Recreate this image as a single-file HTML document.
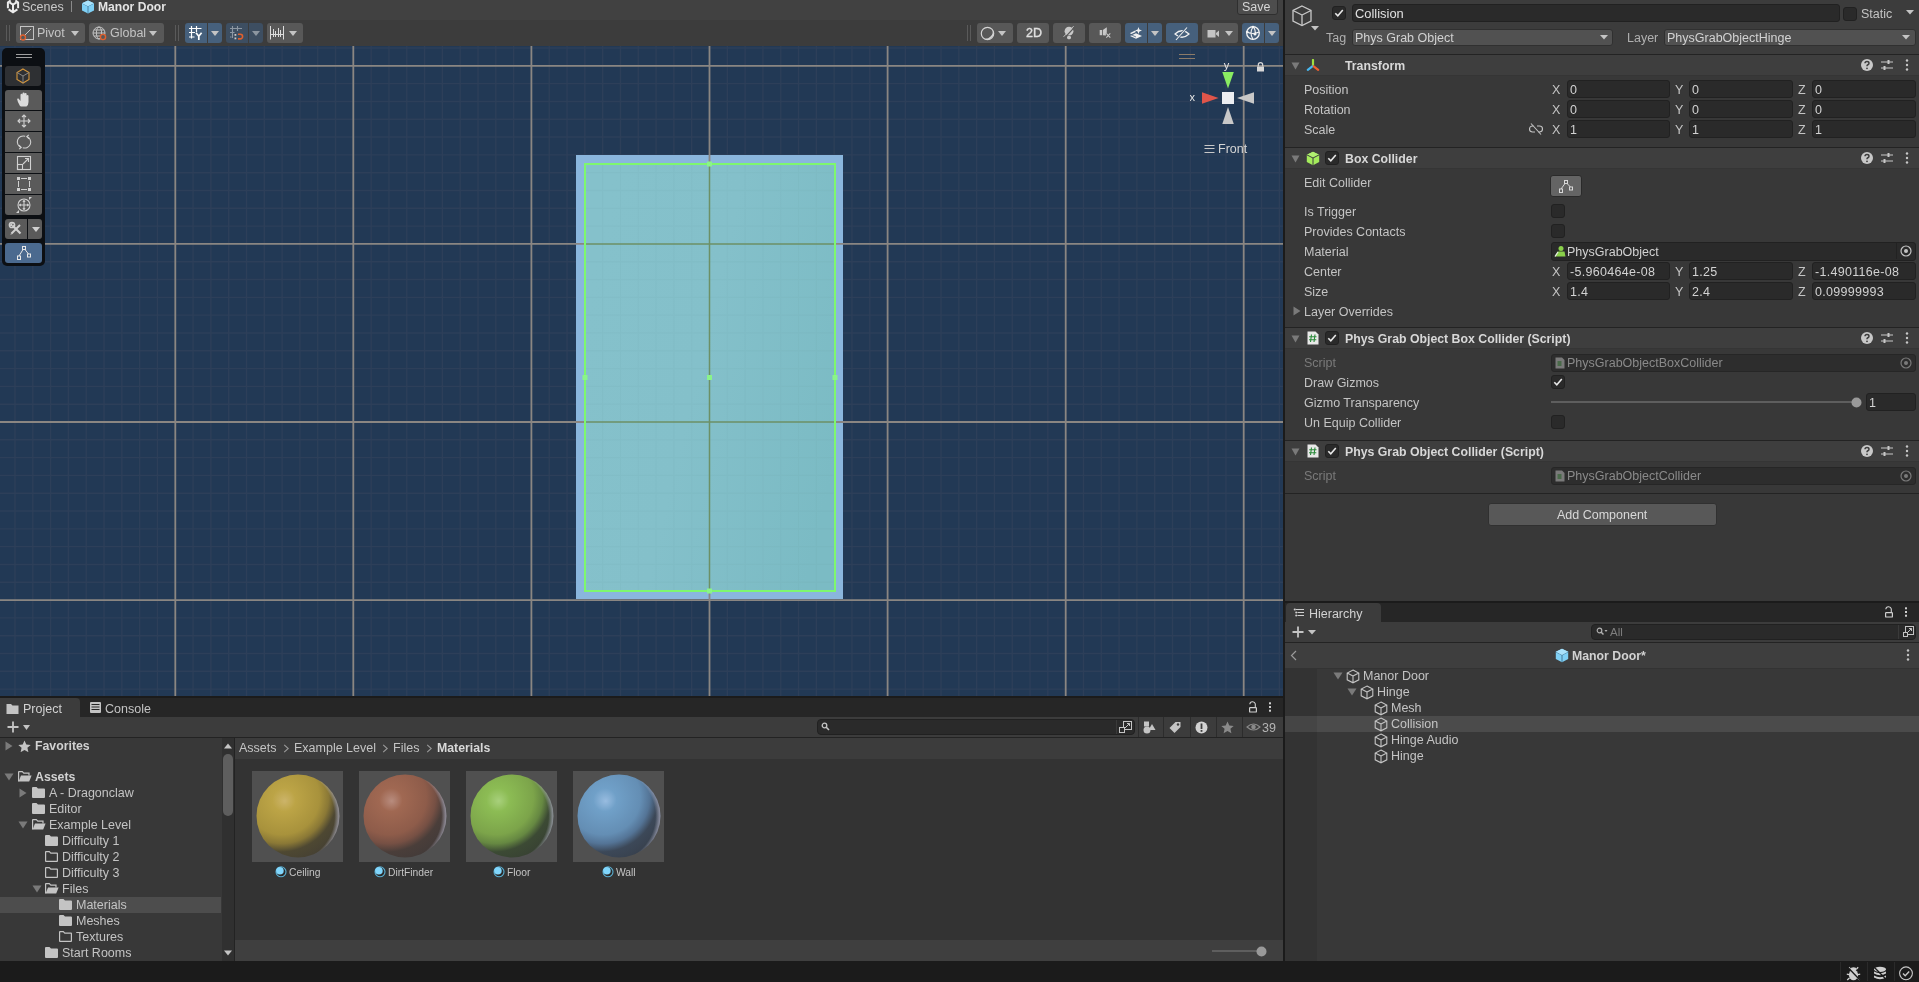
<!DOCTYPE html><html><head><meta charset="utf-8"><style>
html,body{margin:0;padding:0;}
body{width:1919px;height:982px;overflow:hidden;position:relative;background:#383838;font-family:"Liberation Sans",sans-serif;}
.t{position:absolute;white-space:nowrap;line-height:14px;-webkit-font-smoothing:antialiased;will-change:transform;font-family:"Liberation Sans",sans-serif;}
.r{position:absolute;}
</style></head><body>
<div class="r" style="left:0px;top:0px;width:1283px;height:20px;background:#414141;"></div>
<div class="r" style="left:0px;top:20px;width:1283px;height:26px;background:#3c3c3c;"></div>
<div class="r" style="left:1283px;top:0px;width:2px;height:961px;background:#1b1b1b;"></div>
<div class="r" style="left:0px;top:696px;width:1283px;height:2px;background:#1b1b1b;"></div>
<div class="r" style="left:0px;top:961px;width:1919px;height:21px;background:#1b1b1b;"></div>
<svg width="1283" height="650" style="position:absolute;left:0;top:46px"><rect width="1283" height="650" fill="#223955"/><path d="M14.99 0V650 M32.80 0V650 M50.60 0V650 M68.41 0V650 M86.22 0V650 M104.03 0V650 M121.84 0V650 M139.64 0V650 M157.45 0V650 M193.07 0V650 M210.88 0V650 M228.68 0V650 M246.49 0V650 M264.30 0V650 M282.11 0V650 M299.92 0V650 M317.72 0V650 M335.53 0V650 M371.15 0V650 M388.96 0V650 M406.76 0V650 M424.57 0V650 M442.38 0V650 M460.19 0V650 M478.00 0V650 M495.80 0V650 M513.61 0V650 M549.23 0V650 M567.04 0V650 M584.84 0V650 M602.65 0V650 M620.46 0V650 M638.27 0V650 M656.08 0V650 M673.88 0V650 M691.69 0V650 M727.31 0V650 M745.12 0V650 M762.92 0V650 M780.73 0V650 M798.54 0V650 M816.35 0V650 M834.16 0V650 M851.96 0V650 M869.77 0V650 M905.39 0V650 M923.20 0V650 M941.00 0V650 M958.81 0V650 M976.62 0V650 M994.43 0V650 M1012.24 0V650 M1030.04 0V650 M1047.85 0V650 M1083.47 0V650 M1101.28 0V650 M1119.08 0V650 M1136.89 0V650 M1154.70 0V650 M1172.51 0V650 M1190.32 0V650 M1208.12 0V650 M1225.93 0V650 M1261.55 0V650 M1279.36 0V650 M0 2.03H1283 M0 37.65H1283 M0 55.46H1283 M0 73.26H1283 M0 91.07H1283 M0 108.88H1283 M0 126.69H1283 M0 144.50H1283 M0 162.30H1283 M0 180.11H1283 M0 215.73H1283 M0 233.54H1283 M0 251.34H1283 M0 269.15H1283 M0 286.96H1283 M0 304.77H1283 M0 322.58H1283 M0 340.38H1283 M0 358.19H1283 M0 393.81H1283 M0 411.62H1283 M0 429.42H1283 M0 447.23H1283 M0 465.04H1283 M0 482.85H1283 M0 500.66H1283 M0 518.46H1283 M0 536.27H1283 M0 571.89H1283 M0 589.70H1283 M0 607.50H1283 M0 625.31H1283 M0 643.12H1283" stroke="#2d3f59" stroke-width="1.4" fill="none"/><rect x="576" y="109" width="267" height="444" fill="#8ab6dd"/><path d="M175.3 0V650 M353.3 0V650 M531.4 0V650 M709.5 0V650 M887.6 0V650 M1065.7 0V650 M1243.7 0V650 M0 19.8H1283 M0 197.9H1283 M0 376.0H1283 M0 554.1H1283" stroke="#8a8682" stroke-width="1.8" fill="none"/><defs><linearGradient id="tealg" x1="0" y1="0.3" x2="1" y2="0.7"><stop offset="0" stop-color="#85c1cb"/><stop offset="0.45" stop-color="#84c0ca"/><stop offset="1" stop-color="#7bbbc4"/></linearGradient></defs><rect x="585" y="118" width="250" height="427" fill="url(#tealg)"/><clipPath id="tealclip"><rect x="585" y="118" width="250" height="427"/></clipPath><path clip-path="url(#tealclip)" d="M14.99 0V650 M32.80 0V650 M50.60 0V650 M68.41 0V650 M86.22 0V650 M104.03 0V650 M121.84 0V650 M139.64 0V650 M157.45 0V650 M193.07 0V650 M210.88 0V650 M228.68 0V650 M246.49 0V650 M264.30 0V650 M282.11 0V650 M299.92 0V650 M317.72 0V650 M335.53 0V650 M371.15 0V650 M388.96 0V650 M406.76 0V650 M424.57 0V650 M442.38 0V650 M460.19 0V650 M478.00 0V650 M495.80 0V650 M513.61 0V650 M549.23 0V650 M567.04 0V650 M584.84 0V650 M602.65 0V650 M620.46 0V650 M638.27 0V650 M656.08 0V650 M673.88 0V650 M691.69 0V650 M727.31 0V650 M745.12 0V650 M762.92 0V650 M780.73 0V650 M798.54 0V650 M816.35 0V650 M834.16 0V650 M851.96 0V650 M869.77 0V650 M905.39 0V650 M923.20 0V650 M941.00 0V650 M958.81 0V650 M976.62 0V650 M994.43 0V650 M1012.24 0V650 M1030.04 0V650 M1047.85 0V650 M1083.47 0V650 M1101.28 0V650 M1119.08 0V650 M1136.89 0V650 M1154.70 0V650 M1172.51 0V650 M1190.32 0V650 M1208.12 0V650 M1225.93 0V650 M1261.55 0V650 M1279.36 0V650 M0 2.03H1283 M0 37.65H1283 M0 55.46H1283 M0 73.26H1283 M0 91.07H1283 M0 108.88H1283 M0 126.69H1283 M0 144.50H1283 M0 162.30H1283 M0 180.11H1283 M0 215.73H1283 M0 233.54H1283 M0 251.34H1283 M0 269.15H1283 M0 286.96H1283 M0 304.77H1283 M0 322.58H1283 M0 340.38H1283 M0 358.19H1283 M0 393.81H1283 M0 411.62H1283 M0 429.42H1283 M0 447.23H1283 M0 465.04H1283 M0 482.85H1283 M0 500.66H1283 M0 518.46H1283 M0 536.27H1283 M0 571.89H1283 M0 589.70H1283 M0 607.50H1283 M0 625.31H1283 M0 643.12H1283" stroke="#000000" stroke-opacity="0.016" stroke-width="1.3" fill="none"/><path clip-path="url(#tealclip)" d="M175.3 0V650 M353.3 0V650 M531.4 0V650 M709.5 0V650 M887.6 0V650 M1065.7 0V650 M1243.7 0V650 M0 19.8H1283 M0 197.9H1283 M0 376.0H1283 M0 554.1H1283" stroke="#6c9066" stroke-width="1.5" fill="none"/><rect x="585" y="118" width="250" height="427" fill="none" stroke="#7ef76e" stroke-width="2"/><rect x="707.0" y="115.5" width="5" height="5" fill="#8af48a"/><rect x="707.0" y="542.5" width="5" height="5" fill="#8af48a"/><rect x="582.5" y="329.0" width="5" height="5" fill="#8af48a"/><rect x="832.5" y="329.0" width="5" height="5" fill="#8af48a"/><rect x="707.0" y="329.0" width="5" height="5" fill="#8af48a"/></svg>
<svg class="r" style="left:5px;top:0px;" width="16" height="14" viewBox="0 0 16 14"><g fill="none" stroke="#ececec" stroke-width="2" stroke-linejoin="miter"><path d="M2.9 8.2V2.6L5.6 0.4"/><path d="M13.1 8.2V2.6L10.4 0.4"/><path d="M4.4 2.4L8 4.6L11.6 2.4"/><path d="M8 4.6V11"/><path d="M3.6 9.4L8 12.2L12.4 9.4"/></g></svg>
<div class="t" style="left:22.40px;top:0.30px;font-size:12.5px;color:#c8c8c8;">Scenes</div>
<div class="r" style="left:71px;top:1px;width:1px;height:11px;background:#8a8a8a;"></div>
<svg class="r" style="left:81px;top:0px;" width="14" height="14" viewBox="0 0 14 14"><path d="M7 0.5 L13 3.2 L13 10.5 L7 13.5 L1 10.5 L1 3.2Z" fill="#7fd0f5"/><path d="M7 6.2 L13 3.2 M7 6.2 L1 3.2 M7 6.2 V13.5" stroke="#3f6f8f" stroke-width="0.8" fill="none"/><path d="M7 0.5 L13 3.2 L7 6.2 L1 3.2Z" fill="#a9e2fb"/></svg>
<div class="t" style="left:97.60px;top:0.48px;font-size:12.1px;color:#e4e4e4;font-weight:bold;">Manor Door</div>
<div class="r" style="left:1237px;top:-3px;width:41px;height:18px;background:#4d4d4d;border:1px solid #2f2f2f;border-radius:3px;box-sizing:border-box;"></div>
<div class="t" style="left:1242.00px;top:-0.20px;font-size:12.5px;color:#d6d6d6;">Save</div>
<div class="r" style="left:6px;top:25px;width:1px;height:16px;background:#5a5a5a;"></div>
<div class="r" style="left:9px;top:25px;width:1px;height:16px;background:#5a5a5a;"></div>
<div class="r" style="left:16px;top:23px;width:69px;height:20px;background:#585858;border-radius:3px;"></div>
<svg class="r" style="left:19px;top:25px;" width="16" height="16" viewBox="0 0 16 16"><rect x="1.5" y="1.5" width="13" height="13" fill="none" stroke="#c4c4c4" stroke-width="1"/><path d="M5.5 10.5 L12 4" stroke="#c4c4c4" stroke-width="1"/><circle cx="4" cy="12.5" r="2.5" fill="#585858" stroke="#e0602e" stroke-width="1.3"/></svg>
<div class="t" style="left:37.10px;top:26.20px;font-size:12.5px;color:#c4c4c4;">Pivot</div>
<svg class="r" style="left:71px;top:31px;" width="8" height="5" viewBox="0 0 8 5"><path d="M0 0H8L4.0 5Z" fill="#c4c4c4"/></svg>
<div class="r" style="left:89px;top:23px;width:75px;height:20px;background:#585858;border-radius:3px;"></div>
<svg class="r" style="left:92px;top:26px;" width="15" height="15" viewBox="0 0 15 15"><g fill="none" stroke="#c4c4c4" stroke-width="1"><circle cx="7" cy="7" r="6"/><ellipse cx="7" cy="7" rx="2.6" ry="6"/><path d="M1 7H13M2 4H12M2 10H12"/></g><circle cx="11" cy="11" r="2.6" fill="#585858" stroke="#e0602e" stroke-width="1.4"/></svg>
<div class="t" style="left:110.00px;top:26.20px;font-size:12.5px;color:#c4c4c4;">Global</div>
<svg class="r" style="left:149px;top:31px;" width="8" height="5" viewBox="0 0 8 5"><path d="M0 0H8L4.0 5Z" fill="#c4c4c4"/></svg>
<div class="r" style="left:175px;top:25px;width:1px;height:16px;background:#5a5a5a;"></div>
<div class="r" style="left:178px;top:25px;width:1px;height:16px;background:#5a5a5a;"></div>
<div class="r" style="left:185px;top:23px;width:22px;height:20px;background:#46607c;border-radius:3px 0 0 3px;"></div>
<div class="r" style="left:208px;top:23px;width:14px;height:20px;background:#46607c;border-radius:0 3px 3px 0;"></div>
<svg class="r" style="left:188px;top:25px;" width="16" height="16" viewBox="0 0 16 16"><g stroke="#ffffff" stroke-width="1.2" fill="none"><path d="M3.5 1V13.5M8.5 1V7M1 3.5H13.5M1 7.5H7M1 12H6.5"/></g><path d="M8 7.8 L10.8 11.2 L13.6 7.8 M10.8 11.2V15" stroke="#ffffff" stroke-width="1.7" fill="none"/></svg>
<svg class="r" style="left:211px;top:31px;" width="8" height="5" viewBox="0 0 8 5"><path d="M0 0H8L4.0 5Z" fill="#c4c4c4"/></svg>
<div class="r" style="left:226px;top:23px;width:22px;height:20px;background:#3d4e61;border-radius:3px 0 0 3px;"></div>
<div class="r" style="left:249px;top:23px;width:14px;height:20px;background:#3d4e61;border-radius:0 3px 3px 0;"></div>
<svg class="r" style="left:229px;top:25px;" width="16" height="16" viewBox="0 0 16 16"><g stroke="#8c97a3" stroke-width="1.1" fill="none"><path d="M3.5 1V13M8.5 1V6M1 3.5H13M1 7.5H5.5M1 12H2.5"/></g><rect x="5.5" y="9" width="1.8" height="1.8" fill="#c8c8c8"/><rect x="5.5" y="12.5" width="1.8" height="1.8" fill="#c8c8c8"/><path d="M9 9.3 H11.3 A2.3 2.3 0 0 1 11.3 13.9 H9" stroke="#e0602e" stroke-width="1.6" fill="none"/></svg>
<svg class="r" style="left:252px;top:31px;" width="8" height="5" viewBox="0 0 8 5"><path d="M0 0H8L4.0 5Z" fill="#8c96a0"/></svg>
<div class="r" style="left:267px;top:23px;width:36px;height:20px;background:#585858;border-radius:3px;"></div>
<svg class="r" style="left:269px;top:25px;" width="16" height="16" viewBox="0 0 16 16"><g stroke="#dcdcdc" stroke-width="1"><path d="M1.5 1V14.5M14.5 1V14.5M4.5 4V12M6.5 6V12M9.5 3V12M11.5 5V12M1.5 9.5H14.5"/></g></svg>
<svg class="r" style="left:289px;top:31px;" width="8" height="5" viewBox="0 0 8 5"><path d="M0 0H8L4.0 5Z" fill="#c4c4c4"/></svg>
<div class="r" style="left:967px;top:25px;width:1px;height:16px;background:#5a5a5a;"></div>
<div class="r" style="left:970px;top:25px;width:1px;height:16px;background:#5a5a5a;"></div>
<div class="r" style="left:977px;top:23px;width:36px;height:20px;background:#585858;border-radius:3px;"></div>
<svg class="r" style="left:980px;top:26px;" width="16" height="16" viewBox="0 0 16 16"><circle cx="7.5" cy="7.5" r="6.2" fill="none" stroke="#d4d4d4" stroke-width="1.2"/><path d="M12.2 3.4 A6.4 6.4 0 0 1 3.6 12.6 A7 6 -30 0 0 12.2 3.4Z" fill="#d4d4d4"/></svg>
<svg class="r" style="left:998px;top:31px;" width="8" height="5" viewBox="0 0 8 5"><path d="M0 0H8L4.0 5Z" fill="#c4c4c4"/></svg>
<div class="r" style="left:1017px;top:23px;width:32px;height:20px;background:#585858;border-radius:3px;"></div>
<div class="t" style="left:1025.80px;top:25.90px;font-size:12.5px;color:#e0e0e0;-webkit-text-stroke:0.35px #e0e0e0;">2D</div>
<div class="r" style="left:1053px;top:23px;width:32px;height:20px;background:#585858;border-radius:3px;"></div>
<svg class="r" style="left:1061px;top:25px;" width="16" height="17" viewBox="0 0 16 17"><circle cx="8" cy="6.2" r="4.4" fill="#c8c8c8"/><rect x="6" y="11" width="4" height="3.2" rx="1.4" fill="#c8c8c8"/><path d="M3.8 12.6 L13.4 2.4" stroke="#585858" stroke-width="1.3"/><path d="M2.6 11.8 L12.6 1.2" stroke="#c8c8c8" stroke-width="1"/></svg>
<div class="r" style="left:1089px;top:23px;width:32px;height:20px;background:#585858;border-radius:3px;"></div>
<svg class="r" style="left:1098px;top:25px;" width="14" height="15" viewBox="0 0 14 15"><rect x="1.7" y="5" width="2.3" height="5.2" fill="#c8c8c8"/><path d="M4.8 5 L8.8 2.3 V8.4 L7.8 10.5 L4.8 10.2Z" fill="#c8c8c8"/><path d="M8.3 8.3 L12.3 12.6 M12.3 8.3 L8.3 12.6" stroke="#585858" stroke-width="2.2"/><path d="M8.3 8.3 L12.3 12.6 M12.3 8.3 L8.3 12.6" stroke="#c8c8c8" stroke-width="1.1"/></svg>
<div class="r" style="left:1125px;top:23px;width:22px;height:20px;background:#46607c;border-radius:3px 0 0 3px;"></div>
<div class="r" style="left:1148px;top:23px;width:14px;height:20px;background:#46607c;border-radius:0 3px 3px 0;"></div>
<svg class="r" style="left:1129px;top:26px;" width="15" height="15" viewBox="0 0 15 15"><path d="M1 10 L7 7.2 L13 10 L7 12.8Z" fill="#f0f0f0"/><path d="M1.5 7.6 L6.5 5.2" stroke="#f0f0f0" stroke-width="1.5"/><path d="M1 8.2 L7 11" stroke="#46607c" stroke-width="0.8"/><path d="M9.5 1 L10.4 3.6 L13 4.5 L10.4 5.4 L9.5 8 L8.6 5.4 L6 4.5 L8.6 3.6Z" fill="#f0f0f0"/></svg>
<svg class="r" style="left:1151px;top:31px;" width="8" height="5" viewBox="0 0 8 5"><path d="M0 0H8L4.0 5Z" fill="#c4c4c4"/></svg>
<div class="r" style="left:1166px;top:23px;width:32px;height:20px;background:#46607c;border-radius:3px;"></div>
<svg class="r" style="left:1174px;top:26px;" width="16" height="15" viewBox="0 0 16 15"><path d="M1 8 Q8 1.5 15 8 Q8 14.5 1 8Z" fill="none" stroke="#f0f0f0" stroke-width="1.2"/><path d="M2 14 L13 1.5" stroke="#46607c" stroke-width="2.4"/><path d="M2 14 L13 1.5" stroke="#f0f0f0" stroke-width="1.1"/></svg>
<div class="r" style="left:1202px;top:23px;width:36px;height:20px;background:#585858;border-radius:3px;"></div>
<svg class="r" style="left:1207px;top:28px;" width="13" height="11" viewBox="0 0 13 11"><rect x="0.5" y="2" width="8" height="7.5" fill="#c4c4c4"/><path d="M9 5 L12 2.5 V9 L9 6.5Z" fill="#c4c4c4"/></svg>
<svg class="r" style="left:1225px;top:31px;" width="8" height="5" viewBox="0 0 8 5"><path d="M0 0H8L4.0 5Z" fill="#c4c4c4"/></svg>
<div class="r" style="left:1242px;top:23px;width:22px;height:20px;background:#46607c;border-radius:3px 0 0 3px;"></div>
<div class="r" style="left:1265px;top:23px;width:14px;height:20px;background:#46607c;border-radius:0 3px 3px 0;"></div>
<svg class="r" style="left:1245px;top:25px;" width="16" height="16" viewBox="0 0 16 16"><circle cx="8" cy="8" r="6.3" fill="none" stroke="#f4f4f4" stroke-width="1.3"/><path d="M2 7 Q8 10 14 7 M8 1.7 Q4 8 8 14.3 M8 1.7 Q11 5 10 9.5" fill="none" stroke="#f4f4f4" stroke-width="1.1"/><circle cx="8" cy="2" r="1.3" fill="#f4f4f4"/><circle cx="2.2" cy="7" r="1.3" fill="#f4f4f4"/><circle cx="10" cy="9.3" r="1.3" fill="#f4f4f4"/></svg>
<svg class="r" style="left:1268px;top:31px;" width="8" height="5" viewBox="0 0 8 5"><path d="M0 0H8L4.0 5Z" fill="#c4c4c4"/></svg>
<div class="r" style="left:2px;top:48px;width:43px;height:218px;background:#0c0f13;border-radius:5px;"></div>
<div class="r" style="left:16px;top:54px;width:16px;height:1px;background:#a0a0a0;"></div>
<div class="r" style="left:16px;top:57px;width:16px;height:1px;background:#a0a0a0;"></div>
<div class="r" style="left:5px;top:66px;width:36px;height:20px;background:#2e3033;border-radius:3px;"></div>
<svg class="r" style="left:15px;top:68px;" width="16" height="17" viewBox="0 0 16 17"><path d="M8 1 L14 4.5 V11.5 L8 15 L2 11.5 V4.5Z" fill="none" stroke="#d4963c" stroke-width="1.1"/><path d="M8 8 L14 4.5 M8 8 L2 4.5 M8 8 V15" stroke="#8e8e8e" stroke-width="0.9" fill="none"/></svg>
<div class="r" style="left:5px;top:90px;width:37px;height:20px;background:#5a5a5a;border-radius:3px 3px 0 0;"></div>
<div class="r" style="left:5px;top:111px;width:37px;height:20px;background:#5a5a5a;border-radius:0;"></div>
<div class="r" style="left:5px;top:132px;width:37px;height:20px;background:#5a5a5a;border-radius:0;"></div>
<div class="r" style="left:5px;top:153px;width:37px;height:20px;background:#5a5a5a;border-radius:0;"></div>
<div class="r" style="left:5px;top:174px;width:37px;height:20px;background:#5a5a5a;border-radius:0;"></div>
<div class="r" style="left:5px;top:195px;width:37px;height:20px;background:#5a5a5a;border-radius:0 0 3px 3px;"></div>
<svg class="r" style="left:16px;top:92px;" width="16" height="16" viewBox="0 0 16 16"><path d="M4 14 Q1.5 10 1.2 7.5 Q1 6 2.5 6.5 L4.5 9 V3 Q4.5 1.8 5.5 1.8 Q6.5 1.8 6.5 3 V7 V1.5 Q6.5 0.5 7.6 0.5 Q8.6 0.5 8.6 1.5 V7 V2 Q8.6 1 9.6 1 Q10.6 1 10.6 2 V7.5 V4 Q10.6 3 11.5 3 Q12.5 3 12.5 4 V10 Q12.5 13 10.5 14.5 H5Z" fill="#dcdcdc"/></svg>
<svg class="r" style="left:16px;top:113px;" width="16" height="16" viewBox="0 0 16 16"><g stroke="#d0d0d0" stroke-width="1.1" fill="none"><path d="M8 2V14M2 8H14M6 4L8 2L10 4M6 12L8 14L10 12M4 6L2 8L4 10M12 6L14 8L12 10"/></g></svg>
<svg class="r" style="left:16px;top:134px;" width="16" height="16" viewBox="0 0 16 16"><g stroke="#d0d0d0" stroke-width="1.1" fill="none"><path d="M9.2 2.3 A5.8 5.8 0 0 0 5.2 13.4"/><path d="M6.8 13.7 A5.8 5.8 0 0 0 10.8 2.6"/><path d="M3 11.2 L5.2 13.4 L3.2 15.2"/><path d="M13 4.8 L10.8 2.6 L12.8 0.8"/></g></svg>
<svg class="r" style="left:16px;top:155px;" width="16" height="16" viewBox="0 0 16 16"><g stroke="#d0d0d0" stroke-width="1.1" fill="none"><rect x="1.5" y="1.5" width="13" height="13"/><rect x="1.5" y="9.5" width="5" height="5"/><path d="M7 9L12.5 3.5M9 3.5H12.5V7"/></g></svg>
<svg class="r" style="left:16px;top:176px;" width="16" height="16" viewBox="0 0 16 16"><g fill="#d0d0d0"><rect x="1" y="1" width="3" height="3"/><rect x="12" y="1" width="3" height="3"/><rect x="1" y="12" width="3" height="3"/><rect x="12" y="12" width="3" height="3"/></g><g stroke="#d0d0d0" stroke-width="1"><path d="M2.5 5V11M13.5 5V11M5 2.5H11M5 13.5H11"/></g></svg>
<svg class="r" style="left:16px;top:197px;" width="16" height="16" viewBox="0 0 16 16"><g stroke="#d0d0d0" stroke-width="1.1" fill="none"><circle cx="8" cy="8" r="6"/><path d="M8 3.5V12.5M3.5 8H12.5M6.8 4.7L8 3.5L9.2 4.7M6.8 11.3L8 12.5L9.2 11.3M4.7 6.8L3.5 8L4.7 9.2M11.3 6.8L12.5 8L11.3 9.2"/></g><path d="M0 16L3 13L3 16Z" fill="#d0d0d0"/><path d="M16 0L13 3L13 0Z" fill="#d0d0d0"/></svg>
<div class="r" style="left:5px;top:219px;width:22px;height:20px;background:#5a5a5a;border-radius:3px 0 0 3px;"></div>
<div class="r" style="left:28px;top:219px;width:14px;height:20px;background:#5a5a5a;border-radius:0 3px 3px 0;"></div>
<svg class="r" style="left:8px;top:221px;" width="16" height="16" viewBox="0 0 16 16"><path d="M3.5 12.5 L12 4" stroke="#d0d0d0" stroke-width="2"/><path d="M2.5 14 L3 12 L4 13Z" fill="#d0d0d0"/><path d="M4.5 4.5 L12.5 12.5" stroke="#d0d0d0" stroke-width="2.2"/><path d="M2 5 A3 3 0 0 1 5 2 L4 4 L5 5 Z" fill="#d0d0d0"/><circle cx="4" cy="4" r="2.6" fill="none" stroke="#d0d0d0" stroke-width="1.5"/></svg>
<svg class="r" style="left:32px;top:227px;" width="8" height="5" viewBox="0 0 8 5"><path d="M0 0H8L4.0 5Z" fill="#d0d0d0"/></svg>
<div class="r" style="left:5px;top:243px;width:37px;height:20px;background:#4b6a8f;border-radius:3px;"></div>
<svg class="r" style="left:16px;top:245px;" width="16" height="16" viewBox="0 0 16 16"><g stroke="#e8e8e8" stroke-width="1" fill="none"><rect x="6.5" y="1.5" width="3" height="3"/><rect x="1.5" y="11" width="3" height="3.5"/><rect x="11.5" y="9" width="3" height="3"/><path d="M7 4.5L3 11M9 4.5L12.5 9"/></g></svg>
<div class="r" style="left:1179px;top:54px;width:16px;height:1px;background:#8c7b68;"></div>
<div class="r" style="left:1179px;top:58px;width:16px;height:1px;background:#8c7b68;"></div>
<svg class="r" style="left:1190px;top:58px;will-change:transform;" width="70" height="70" viewBox="0 0 70 70"><text x="33.8" y="10.5" font-family="Liberation Sans" font-size="11" fill="#e6e6e6">y</text><text x="-0.5" y="43" font-family="Liberation Sans" font-size="11" fill="#e6e6e6">x</text><path d="M32.3 14 L43.8 14 L38 30.5Z" fill="#8aec62"/><path d="M12 34.2 L12 45.8 L28.6 40Z" fill="#e0554a"/><rect x="32" y="34" width="12" height="12" fill="#eceef2"/><path d="M64 34.2 L64 45.8 L47 40Z" fill="#c8c8c8"/><path d="M32.3 66 L43.8 66 L38 49Z" fill="#c8c8c8"/></svg>
<svg class="r" style="left:1256px;top:61px;" width="9" height="11" viewBox="0 0 9 11"><path d="M2.3 5.5 V3.8 A2.2 2.2 0 0 1 6.7 3.8 V5.5" fill="none" stroke="#d8d8d8" stroke-width="1.2"/><rect x="1" y="5.5" width="7" height="5" fill="#d8d8d8"/></svg>
<svg class="r" style="left:1204px;top:144px;" width="11" height="10" viewBox="0 0 11 10"><path d="M0.5 1.5H10.5M0.5 4.5H10.5M0.5 8.5H10.5" stroke="#c8c8c8" stroke-width="1"/></svg>
<div class="t" style="left:1218.20px;top:142.00px;font-size:12.5px;color:#d4d4d4;">Front</div>
<div class="r" style="left:0px;top:698px;width:1283px;height:19px;background:#262626;"></div>
<div class="r" style="left:0px;top:698px;width:80px;height:19px;background:#3c3c3c;border-radius:0 4px 0 0;"></div>
<svg class="r" style="left:6px;top:703px;" width="13" height="12" viewBox="0 0 13 12"><path d="M0.5 1 H5 L6.5 2.5 H12.5 V11 H0.5Z" fill="#c4c4c4"/></svg>
<div class="t" style="left:22.60px;top:701.70px;font-size:12.5px;color:#d2d2d2;">Project</div>
<svg class="r" style="left:89.5px;top:702px;" width="11" height="11" viewBox="0 0 11 11"><rect x="0" y="0" width="11" height="11" rx="1" fill="#c4c4c4"/><rect x="1.5" y="2" width="8" height="1" fill="#262626"/><rect x="1.5" y="4.5" width="8" height="1" fill="#262626"/><rect x="1.5" y="7" width="8" height="1" fill="#262626"/></svg>
<div class="t" style="left:104.60px;top:701.70px;font-size:12.5px;color:#c4c4c4;">Console</div>
<svg class="r" style="left:1248px;top:700px;" width="10" height="13" viewBox="0 0 10 13"><path d="M1.8 4.2 A2.8 2.8 0 0 1 7.3 3.8 V7.4" fill="none" stroke="#d0d0d0" stroke-width="1.1"/><rect x="1.6" y="7.6" width="6.8" height="4.4" rx="0.6" fill="none" stroke="#d0d0d0" stroke-width="1.2"/></svg>
<svg class="r" style="left:1268px;top:702px;" width="4" height="10" viewBox="0 0 4 10"><rect x="1" y="0.3" width="2" height="2" fill="#d0d0d0"/><rect x="1" y="4" width="2" height="2" fill="#d0d0d0"/><rect x="1" y="7.7" width="2" height="2" fill="#d0d0d0"/></svg>
<div class="r" style="left:0px;top:717px;width:1283px;height:20px;background:#3c3c3c;"></div>
<div class="r" style="left:0px;top:737px;width:1283px;height:1px;background:#232323;"></div>
<svg class="r" style="left:6px;top:720px;" width="14" height="14" viewBox="0 0 14 14"><path d="M7 1.5V12.5M1.5 7H12.5" stroke="#c4c4c4" stroke-width="1.8"/></svg>
<svg class="r" style="left:23px;top:725px;" width="7" height="5" viewBox="0 0 7 5"><path d="M0 0H7L3.5 5Z" fill="#c4c4c4"/></svg>
<div class="r" style="left:817px;top:719px;width:318px;height:16px;background:#2a2a2a;border:1px solid #212121;border-radius:4px;box-sizing:border-box;"></div>
<svg class="r" style="left:821px;top:722px;" width="9" height="10" viewBox="0 0 9 10"><circle cx="3.5" cy="3.5" r="2.3" fill="none" stroke="#c4c4c4" stroke-width="1.3"/><path d="M5 5L8 8" stroke="#c4c4c4" stroke-width="1.6"/></svg>
<div class="r" style="left:1116px;top:720px;width:1px;height:14px;background:#3a3a3a;"></div>
<svg class="r" style="left:1119px;top:721px;" width="13" height="12" viewBox="0 0 13 12"><rect x="4.5" y="0.5" width="8" height="8" fill="none" stroke="#c4c4c4" stroke-width="1"/><rect x="0.5" y="6.5" width="5" height="5" fill="#2a2a2a" stroke="#c4c4c4" stroke-width="1"/><path d="M6 7L10.5 2.5M8 2.5H10.5V5" stroke="#c4c4c4" stroke-width="1" fill="none"/></svg>
<div class="r" style="left:1137.5px;top:717px;width:1px;height:20px;background:#2c2c2c;"></div>
<div class="r" style="left:1163px;top:717px;width:1px;height:20px;background:#2c2c2c;"></div>
<div class="r" style="left:1189.5px;top:717px;width:1px;height:20px;background:#2c2c2c;"></div>
<div class="r" style="left:1215.5px;top:717px;width:1px;height:20px;background:#2c2c2c;"></div>
<div class="r" style="left:1241.5px;top:717px;width:1px;height:20px;background:#2c2c2c;"></div>
<svg class="r" style="left:1143px;top:721px;" width="13" height="13" viewBox="0 0 13 13"><rect x="1" y="0.5" width="5" height="5" fill="#c4c4c4"/><circle cx="4" cy="9" r="3.5" fill="#c4c4c4"/><path d="M9 3 L12.5 9 H5.5Z" fill="#c4c4c4"/></svg>
<svg class="r" style="left:1169px;top:721px;" width="13" height="13" viewBox="0 0 13 13"><path d="M6.5 1 H11.5 V6 L5.5 12 L0.5 7Z" fill="#c4c4c4"/><circle cx="9" cy="3.5" r="1.2" fill="#3c3c3c"/></svg>
<svg class="r" style="left:1195px;top:721px;" width="13" height="13" viewBox="0 0 13 13"><circle cx="6.5" cy="6.5" r="6" fill="#d2d2d2"/><rect x="5.6" y="2.5" width="1.8" height="5.5" fill="#3c3c3c"/><rect x="5.6" y="9" width="1.8" height="1.8" fill="#3c3c3c"/></svg>
<svg class="r" style="left:1221px;top:721px;" width="13" height="13" viewBox="0 0 13 13"><path d="M6.5 0.5 L8.3 4.5 L12.7 4.9 L9.4 7.8 L10.4 12.2 L6.5 9.9 L2.6 12.2 L3.6 7.8 L0.3 4.9 L4.7 4.5Z" fill="#8a8a8a"/></svg>
<svg class="r" style="left:1246px;top:722px;" width="15" height="10" viewBox="0 0 15 10"><path d="M1 5 Q7.5 -1 14 5 Q7.5 11 1 5Z" fill="none" stroke="#8a8a8a" stroke-width="1.1"/><circle cx="7.5" cy="5" r="2.3" fill="#8a8a8a"/></svg>
<div class="t" style="left:1261.60px;top:720.70px;font-size:12.5px;color:#b4b4b4;">39</div>
<div class="r" style="left:0px;top:738px;width:222px;height:223px;background:#383838;"></div>
<div class="r" style="left:222px;top:738px;width:12px;height:223px;background:#303030;"></div>
<div class="r" style="left:234px;top:738px;width:1px;height:223px;background:#232323;"></div>
<svg class="r" style="left:224px;top:742.5px;" width="8" height="6" viewBox="0 0 8 6"><path d="M0 5.5H8L4 0.5Z" fill="#c4c4c4"/></svg>
<div class="r" style="left:223px;top:754px;width:10px;height:62px;background:#5e5e5e;border-radius:5px;"></div>
<svg class="r" style="left:224px;top:950px;" width="8" height="6" viewBox="0 0 8 6"><path d="M0 0.5H8L4 5.5Z" fill="#c4c4c4"/></svg>
<svg class="r" style="left:5px;top:741px;" width="8" height="10" viewBox="0 0 8 10"><path d="M0.5 0.5V9.5L7.5 5Z" fill="#7a7a7a"/></svg>
<svg class="r" style="left:18px;top:740px;" width="13" height="12" viewBox="0 0 13 12"><path d="M6.5 0.5 L8.3 4.5 L12.7 4.9 L9.4 7.8 L10.4 12.2 L6.5 9.9 L2.6 12.2 L3.6 7.8 L0.3 4.9 L4.7 4.5Z" fill="#c4c4c4"/></svg>
<div class="t" style="left:35.00px;top:739.04px;font-size:12.3px;color:#d2d2d2;font-weight:bold;">Favorites</div>
<div class="r" style="left:0px;top:897px;width:221px;height:16px;background:#4d4d4d;"></div>
<svg class="r" style="left:4.4px;top:773.25px;" width="10" height="8" viewBox="0 0 10 8"><path d="M0.5 0.5H9.5L5 7.5Z" fill="#7a7a7a"/></svg>
<svg class="r" style="left:18.0px;top:771.25px;" width="14" height="11" viewBox="0 0 14 11"><path d="M0.6 10.4 V1 Q0.6 0.6 1 0.6 H4.3 L5.8 2.1 H11 V4.5" fill="none" stroke="#c4c4c4" stroke-width="1.2"/><path d="M0.6 10.6 L3 4.5 H13.6 L11.2 10.6Z" fill="#c4c4c4"/></svg>
<div class="t" style="left:34.90px;top:770.04px;font-size:12.3px;color:#d2d2d2;font-weight:bold;">Assets</div>
<svg class="r" style="left:18.6px;top:788.25px;" width="8" height="10" viewBox="0 0 8 10"><path d="M0.5 0.5V9.5L7.5 5Z" fill="#7a7a7a"/></svg>
<svg class="r" style="left:31.6px;top:787.25px;" width="13" height="11" viewBox="0 0 13 11"><path d="M0 1 Q0 0 1 0 H4.5 L6 1.5 H12 Q13 1.5 13 2.5 V10 Q13 11 12 11 H1 Q0 11 0 10Z" fill="#c4c4c4"/></svg>
<div class="t" style="left:48.50px;top:785.95px;font-size:12.5px;color:#c4c4c4;">A - Dragonclaw</div>
<svg class="r" style="left:31.6px;top:803.25px;" width="13" height="11" viewBox="0 0 13 11"><path d="M0 1 Q0 0 1 0 H4.5 L6 1.5 H12 Q13 1.5 13 2.5 V10 Q13 11 12 11 H1 Q0 11 0 10Z" fill="#c4c4c4"/></svg>
<div class="t" style="left:48.50px;top:801.95px;font-size:12.5px;color:#c4c4c4;">Editor</div>
<svg class="r" style="left:18.0px;top:821.25px;" width="10" height="8" viewBox="0 0 10 8"><path d="M0.5 0.5H9.5L5 7.5Z" fill="#7a7a7a"/></svg>
<svg class="r" style="left:31.6px;top:819.25px;" width="14" height="11" viewBox="0 0 14 11"><path d="M0.6 10.4 V1 Q0.6 0.6 1 0.6 H4.3 L5.8 2.1 H11 V4.5" fill="none" stroke="#c4c4c4" stroke-width="1.2"/><path d="M0.6 10.6 L3 4.5 H13.6 L11.2 10.6Z" fill="#c4c4c4"/></svg>
<div class="t" style="left:48.50px;top:817.95px;font-size:12.5px;color:#c4c4c4;">Example Level</div>
<svg class="r" style="left:45.2px;top:835.25px;" width="13" height="11" viewBox="0 0 13 11"><path d="M0 1 Q0 0 1 0 H4.5 L6 1.5 H12 Q13 1.5 13 2.5 V10 Q13 11 12 11 H1 Q0 11 0 10Z" fill="#c4c4c4"/></svg>
<div class="t" style="left:62.10px;top:833.95px;font-size:12.5px;color:#c4c4c4;">Difficulty 1</div>
<svg class="r" style="left:45.2px;top:851.25px;" width="13" height="11" viewBox="0 0 13 11"><path d="M0.6 1 Q0.6 0.6 1 0.6 H4.3 L5.8 2.1 H12 Q12.4 2.1 12.4 2.5 V10 Q12.4 10.4 12 10.4 H1 Q0.6 10.4 0.6 10Z" fill="none" stroke="#c4c4c4" stroke-width="1.2"/></svg>
<div class="t" style="left:62.10px;top:849.95px;font-size:12.5px;color:#c4c4c4;">Difficulty 2</div>
<svg class="r" style="left:45.2px;top:867.25px;" width="13" height="11" viewBox="0 0 13 11"><path d="M0.6 1 Q0.6 0.6 1 0.6 H4.3 L5.8 2.1 H12 Q12.4 2.1 12.4 2.5 V10 Q12.4 10.4 12 10.4 H1 Q0.6 10.4 0.6 10Z" fill="none" stroke="#c4c4c4" stroke-width="1.2"/></svg>
<div class="t" style="left:62.10px;top:865.95px;font-size:12.5px;color:#c4c4c4;">Difficulty 3</div>
<svg class="r" style="left:31.6px;top:885.25px;" width="10" height="8" viewBox="0 0 10 8"><path d="M0.5 0.5H9.5L5 7.5Z" fill="#7a7a7a"/></svg>
<svg class="r" style="left:45.2px;top:883.25px;" width="14" height="11" viewBox="0 0 14 11"><path d="M0.6 10.4 V1 Q0.6 0.6 1 0.6 H4.3 L5.8 2.1 H11 V4.5" fill="none" stroke="#c4c4c4" stroke-width="1.2"/><path d="M0.6 10.6 L3 4.5 H13.6 L11.2 10.6Z" fill="#c4c4c4"/></svg>
<div class="t" style="left:62.10px;top:881.95px;font-size:12.5px;color:#c4c4c4;">Files</div>
<svg class="r" style="left:58.8px;top:899.25px;" width="13" height="11" viewBox="0 0 13 11"><path d="M0 1 Q0 0 1 0 H4.5 L6 1.5 H12 Q13 1.5 13 2.5 V10 Q13 11 12 11 H1 Q0 11 0 10Z" fill="#c4c4c4"/></svg>
<div class="t" style="left:75.70px;top:897.95px;font-size:12.5px;color:#c4c4c4;">Materials</div>
<svg class="r" style="left:58.8px;top:915.25px;" width="13" height="11" viewBox="0 0 13 11"><path d="M0 1 Q0 0 1 0 H4.5 L6 1.5 H12 Q13 1.5 13 2.5 V10 Q13 11 12 11 H1 Q0 11 0 10Z" fill="#c4c4c4"/></svg>
<div class="t" style="left:75.70px;top:913.95px;font-size:12.5px;color:#c4c4c4;">Meshes</div>
<svg class="r" style="left:58.8px;top:931.25px;" width="13" height="11" viewBox="0 0 13 11"><path d="M0.6 1 Q0.6 0.6 1 0.6 H4.3 L5.8 2.1 H12 Q12.4 2.1 12.4 2.5 V10 Q12.4 10.4 12 10.4 H1 Q0.6 10.4 0.6 10Z" fill="none" stroke="#c4c4c4" stroke-width="1.2"/></svg>
<div class="t" style="left:75.70px;top:929.95px;font-size:12.5px;color:#c4c4c4;">Textures</div>
<svg class="r" style="left:45.2px;top:947.25px;" width="13" height="11" viewBox="0 0 13 11"><path d="M0 1 Q0 0 1 0 H4.5 L6 1.5 H12 Q13 1.5 13 2.5 V10 Q13 11 12 11 H1 Q0 11 0 10Z" fill="#c4c4c4"/></svg>
<div class="t" style="left:62.10px;top:945.95px;font-size:12.5px;color:#c4c4c4;">Start Rooms</div>
<div class="r" style="left:235px;top:738px;width:1048px;height:21px;background:#3c3c3c;"></div>
<div class="r" style="left:235px;top:759px;width:1048px;height:181px;background:#333333;"></div>
<div class="r" style="left:235px;top:940px;width:1048px;height:21px;background:#3f3f3f;"></div>
<div class="t" style="left:239.10px;top:740.50px;font-size:12.5px;color:#c4c4c4;">Assets</div>
<div class="t" style="left:293.60px;top:740.50px;font-size:12.5px;color:#c4c4c4;">Example Level</div>
<div class="t" style="left:393.00px;top:740.50px;font-size:12.5px;color:#c4c4c4;">Files</div>
<div class="t" style="left:436.80px;top:740.59px;font-size:12.3px;color:#d8d8d8;font-weight:bold;">Materials</div>
<svg class="r" style="left:283px;top:743.5px;" width="7" height="9" viewBox="0 0 7 9"><path d="M1.2 0.8L5.2 4.5L1.2 8.2" fill="none" stroke="#9a9a9a" stroke-width="1.1"/></svg>
<svg class="r" style="left:382px;top:743.5px;" width="7" height="9" viewBox="0 0 7 9"><path d="M1.2 0.8L5.2 4.5L1.2 8.2" fill="none" stroke="#9a9a9a" stroke-width="1.1"/></svg>
<svg class="r" style="left:425.5px;top:743.5px;" width="7" height="9" viewBox="0 0 7 9"><path d="M1.2 0.8L5.2 4.5L1.2 8.2" fill="none" stroke="#9a9a9a" stroke-width="1.1"/></svg>
<div class="r" style="left:1212px;top:950px;width:50px;height:2px;background:#5e5e5e;"></div>
<svg class="r" style="left:1256px;top:946px;" width="11" height="11" viewBox="0 0 11 11"><circle cx="5.5" cy="5.5" r="5" fill="#999999"/></svg>
<div class="r" style="left:252px;top:771px;width:91px;height:91px;background:#505050;"></div>
<svg class="r" style="left:256px;top:774px;" width="84" height="84" viewBox="0 0 84 84"><defs><radialGradient id="h0" cx="0.27" cy="0.22" r="1.0" fx="0.34" fy="0.32"><stop offset="0" stop-color="#ccb46a"/><stop offset="0.14" stop-color="#bca446"/><stop offset="0.45" stop-color="#a8923c"/><stop offset="0.57" stop-color="#8a7836"/><stop offset="0.68" stop-color="#4e4832"/><stop offset="1" stop-color="#3e3a34"/></radialGradient><radialGradient id="k0" cx="0.38" cy="0.5" r="0.62"><stop offset="0.9" stop-color="#b8b8cc" stop-opacity="0"/><stop offset="1" stop-color="#b8b8cc" stop-opacity="0.7"/></radialGradient></defs><circle cx="42" cy="42" r="41.5" fill="url(#h0)"/><circle cx="42" cy="42" r="41.5" fill="url(#k0)"/></svg>
<svg class="r" style="left:274.8px;top:866px;" width="12" height="12" viewBox="0 0 12 12"><circle cx="6" cy="5.8" r="5" fill="#2a2a2a" stroke="#5aaed0" stroke-width="1.1"/><circle cx="4.9" cy="4.7" r="3.8" fill="#80d6fc"/></svg>
<div class="t" style="left:288.90px;top:865.99px;font-size:10.3px;color:#c4c4c4;">Ceiling</div>
<div class="r" style="left:359px;top:771px;width:91px;height:91px;background:#505050;"></div>
<svg class="r" style="left:363px;top:774px;" width="84" height="84" viewBox="0 0 84 84"><defs><radialGradient id="h1" cx="0.27" cy="0.22" r="1.0" fx="0.34" fy="0.32"><stop offset="0" stop-color="#b88c7e"/><stop offset="0.14" stop-color="#a06852"/><stop offset="0.45" stop-color="#8e5c4a"/><stop offset="0.57" stop-color="#765044"/><stop offset="0.68" stop-color="#4a3e3a"/><stop offset="1" stop-color="#3c3838"/></radialGradient><radialGradient id="k1" cx="0.38" cy="0.5" r="0.62"><stop offset="0.9" stop-color="#b8b8cc" stop-opacity="0"/><stop offset="1" stop-color="#b8b8cc" stop-opacity="0.7"/></radialGradient></defs><circle cx="42" cy="42" r="41.5" fill="url(#h1)"/><circle cx="42" cy="42" r="41.5" fill="url(#k1)"/></svg>
<svg class="r" style="left:373.9px;top:866px;" width="12" height="12" viewBox="0 0 12 12"><circle cx="6" cy="5.8" r="5" fill="#2a2a2a" stroke="#5aaed0" stroke-width="1.1"/><circle cx="4.9" cy="4.7" r="3.8" fill="#80d6fc"/></svg>
<div class="t" style="left:388.00px;top:865.99px;font-size:10.3px;color:#c4c4c4;">DirtFinder</div>
<div class="r" style="left:466px;top:771px;width:91px;height:91px;background:#505050;"></div>
<svg class="r" style="left:470px;top:774px;" width="84" height="84" viewBox="0 0 84 84"><defs><radialGradient id="h2" cx="0.27" cy="0.22" r="1.0" fx="0.34" fy="0.32"><stop offset="0" stop-color="#a8d07c"/><stop offset="0.14" stop-color="#8cbc54"/><stop offset="0.45" stop-color="#7ca44a"/><stop offset="0.57" stop-color="#668842"/><stop offset="0.68" stop-color="#3c4a34"/><stop offset="1" stop-color="#343a32"/></radialGradient><radialGradient id="k2" cx="0.38" cy="0.5" r="0.62"><stop offset="0.9" stop-color="#b8b8cc" stop-opacity="0"/><stop offset="1" stop-color="#b8b8cc" stop-opacity="0.7"/></radialGradient></defs><circle cx="42" cy="42" r="41.5" fill="url(#h2)"/><circle cx="42" cy="42" r="41.5" fill="url(#k2)"/></svg>
<svg class="r" style="left:493.2px;top:866px;" width="12" height="12" viewBox="0 0 12 12"><circle cx="6" cy="5.8" r="5" fill="#2a2a2a" stroke="#5aaed0" stroke-width="1.1"/><circle cx="4.9" cy="4.7" r="3.8" fill="#80d6fc"/></svg>
<div class="t" style="left:507.30px;top:865.99px;font-size:10.3px;color:#c4c4c4;">Floor</div>
<div class="r" style="left:573px;top:771px;width:91px;height:91px;background:#505050;"></div>
<svg class="r" style="left:577px;top:774px;" width="84" height="84" viewBox="0 0 84 84"><defs><radialGradient id="h3" cx="0.27" cy="0.22" r="1.0" fx="0.34" fy="0.32"><stop offset="0" stop-color="#98bce0"/><stop offset="0.14" stop-color="#70a0c8"/><stop offset="0.45" stop-color="#648eb4"/><stop offset="0.57" stop-color="#547496"/><stop offset="0.68" stop-color="#3c4858"/><stop offset="1" stop-color="#343a44"/></radialGradient><radialGradient id="k3" cx="0.38" cy="0.5" r="0.62"><stop offset="0.9" stop-color="#b8b8cc" stop-opacity="0"/><stop offset="1" stop-color="#b8b8cc" stop-opacity="0.7"/></radialGradient></defs><circle cx="42" cy="42" r="41.5" fill="url(#h3)"/><circle cx="42" cy="42" r="41.5" fill="url(#k3)"/></svg>
<svg class="r" style="left:602.2px;top:866px;" width="12" height="12" viewBox="0 0 12 12"><circle cx="6" cy="5.8" r="5" fill="#2a2a2a" stroke="#5aaed0" stroke-width="1.1"/><circle cx="4.9" cy="4.7" r="3.8" fill="#80d6fc"/></svg>
<div class="t" style="left:616.30px;top:865.99px;font-size:10.3px;color:#c4c4c4;">Wall</div>
<div class="r" style="left:1285px;top:0px;width:634px;height:54px;background:#3c3c3c;"></div>
<div class="r" style="left:1285px;top:54px;width:634px;height:1px;background:#232323;"></div>
<svg class="r" style="left:1292px;top:5px;" width="21" height="23" viewBox="0 0 21 23"><path d="M10 1 L19 5.5 V16 L10 20.5 L1 16 V5.5Z" fill="none" stroke="#c8c8c8" stroke-width="1.3"/><path d="M10 10 L19 5.5 M10 10 L1 5.5 M10 10 V20.5" stroke="#c8c8c8" stroke-width="1.3" fill="none"/></svg>
<svg class="r" style="left:1311px;top:26px;" width="8" height="5" viewBox="0 0 8 5"><path d="M0 0H8L4 4.5Z" fill="#c4c4c4"/></svg>
<div class="r" style="left:1332px;top:6px;width:14px;height:14px;background:#2a2a2a;border:1px solid #212121;border-radius:3px;box-sizing:border-box;"></div>
<svg class="r" style="left:1332px;top:6px;" width="14" height="14" viewBox="0 0 14 14"><path d="M3.3 7.2 L5.8 9.8 L10.8 4" fill="none" stroke="#e8e8e8" stroke-width="1.6"/></svg>
<div class="r" style="left:1352px;top:4px;width:488px;height:18px;background:#2a2a2a;border:1px solid #212121;border-radius:3px;box-sizing:border-box;"></div>
<div class="t" style="left:1354.80px;top:7.02px;font-size:12.9px;color:#e0e0e0;">Collision</div>
<div class="r" style="left:1843px;top:6.5px;width:14px;height:14px;background:#2a2a2a;border:1px solid #212121;border-radius:3px;box-sizing:border-box;"></div>
<div class="t" style="left:1860.60px;top:7.30px;font-size:12.5px;color:#c4c4c4;">Static</div>
<svg class="r" style="left:1906px;top:10px;" width="8" height="5" viewBox="0 0 8 5"><path d="M0 0H8L4 4.5Z" fill="#c4c4c4"/></svg>
<div class="t" style="left:1325.60px;top:30.70px;font-size:12.5px;color:#b0b0b0;">Tag</div>
<div class="r" style="left:1352px;top:29px;width:261px;height:17px;background:#515151;border:1px solid #303030;border-radius:3px;box-sizing:border-box;"></div>
<div class="t" style="left:1354.60px;top:30.70px;font-size:12.5px;color:#d2d2d2;">Phys Grab Object</div>
<svg class="r" style="left:1600px;top:35px;" width="8" height="5" viewBox="0 0 8 5"><path d="M0 0H8L4 4.5Z" fill="#c4c4c4"/></svg>
<div class="t" style="left:1626.60px;top:30.70px;font-size:12.5px;color:#b0b0b0;">Layer</div>
<div class="r" style="left:1664px;top:29px;width:252px;height:17px;background:#515151;border:1px solid #303030;border-radius:3px;box-sizing:border-box;"></div>
<div class="t" style="left:1666.60px;top:30.70px;font-size:12.5px;color:#d2d2d2;">PhysGrabObjectHinge</div>
<svg class="r" style="left:1902px;top:35px;" width="8" height="5" viewBox="0 0 8 5"><path d="M0 0H8L4 4.5Z" fill="#c4c4c4"/></svg>
<div class="r" style="left:1285px;top:55px;width:634px;height:20px;background:#3e3e3e;"></div>
<div class="r" style="left:1285px;top:75px;width:634px;height:1px;background:#353535;"></div>
<svg class="r" style="left:1291px;top:62px;" width="9" height="8" viewBox="0 0 9 8"><path d="M0.5 0.5H8.5L4.5 7.5Z" fill="#7a7a7a"/></svg>
<svg class="r" style="left:1306px;top:59px;" width="14" height="13" viewBox="0 0 14 13"><path d="M7 1V6" stroke="#a0e040" stroke-width="2.2" stroke-linecap="round"/><path d="M6.3 7.3 L1.8 10.8" stroke="#48b8f0" stroke-width="2.2" stroke-linecap="round"/><path d="M7.7 7.3 L12.2 10.8" stroke="#f06030" stroke-width="2.2" stroke-linecap="round"/></svg>
<div class="t" style="left:1344.90px;top:59.39px;font-size:12.3px;color:#d8d8d8;font-weight:bold;">Transform</div>
<svg class="r" style="left:1860px;top:58px;" width="14" height="14" viewBox="0 0 14 14"><circle cx="7" cy="7" r="6" fill="#c8c8c8"/><path d="M5 5.3 Q5 3.5 7 3.5 Q9 3.5 9 5.2 Q9 6.4 7.5 7 Q7 7.3 7 8.3" fill="none" stroke="#3e3e3e" stroke-width="1.5"/><circle cx="7" cy="10.3" r="0.9" fill="#3e3e3e"/></svg>
<svg class="r" style="left:1880px;top:58px;" width="14" height="14" viewBox="0 0 14 14"><path d="M1 4H13M1 10H13" stroke="#c8c8c8" stroke-width="1.2"/><rect x="7.5" y="2" width="2" height="4" fill="#c8c8c8"/><rect x="3.5" y="8" width="2" height="4" fill="#c8c8c8"/></svg>
<svg class="r" style="left:1905px;top:59px;" width="4" height="12" viewBox="0 0 4 12"><circle cx="2" cy="1.5" r="1.2" fill="#c8c8c8"/><circle cx="2" cy="6" r="1.2" fill="#c8c8c8"/><circle cx="2" cy="10.5" r="1.2" fill="#c8c8c8"/></svg>
<div class="t" style="left:1303.60px;top:82.70px;font-size:12.5px;color:#c4c4c4;">Position</div>
<div class="t" style="left:1551.90px;top:82.70px;font-size:12.5px;color:#c4c4c4;">X</div>
<div class="r" style="left:1567px;top:80px;width:103px;height:18px;background:#2a2a2a;border:1px solid #212121;border-radius:3px;box-sizing:border-box;"></div>
<div class="t" style="left:1569.80px;top:82.70px;font-size:12.5px;color:#d2d2d2;letter-spacing:0.3px;">0</div>
<div class="t" style="left:1674.60px;top:82.70px;font-size:12.5px;color:#c4c4c4;">Y</div>
<div class="r" style="left:1689px;top:80px;width:104px;height:18px;background:#2a2a2a;border:1px solid #212121;border-radius:3px;box-sizing:border-box;"></div>
<div class="t" style="left:1691.80px;top:82.70px;font-size:12.5px;color:#d2d2d2;letter-spacing:0.3px;">0</div>
<div class="t" style="left:1798.40px;top:82.70px;font-size:12.5px;color:#c4c4c4;">Z</div>
<div class="r" style="left:1812px;top:80px;width:104px;height:18px;background:#2a2a2a;border:1px solid #212121;border-radius:3px;box-sizing:border-box;"></div>
<div class="t" style="left:1814.80px;top:82.70px;font-size:12.5px;color:#d2d2d2;letter-spacing:0.3px;">0</div>
<div class="t" style="left:1303.60px;top:102.70px;font-size:12.5px;color:#c4c4c4;">Rotation</div>
<div class="t" style="left:1551.90px;top:102.70px;font-size:12.5px;color:#c4c4c4;">X</div>
<div class="r" style="left:1567px;top:100px;width:103px;height:18px;background:#2a2a2a;border:1px solid #212121;border-radius:3px;box-sizing:border-box;"></div>
<div class="t" style="left:1569.80px;top:102.70px;font-size:12.5px;color:#d2d2d2;letter-spacing:0.3px;">0</div>
<div class="t" style="left:1674.60px;top:102.70px;font-size:12.5px;color:#c4c4c4;">Y</div>
<div class="r" style="left:1689px;top:100px;width:104px;height:18px;background:#2a2a2a;border:1px solid #212121;border-radius:3px;box-sizing:border-box;"></div>
<div class="t" style="left:1691.80px;top:102.70px;font-size:12.5px;color:#d2d2d2;letter-spacing:0.3px;">0</div>
<div class="t" style="left:1798.40px;top:102.70px;font-size:12.5px;color:#c4c4c4;">Z</div>
<div class="r" style="left:1812px;top:100px;width:104px;height:18px;background:#2a2a2a;border:1px solid #212121;border-radius:3px;box-sizing:border-box;"></div>
<div class="t" style="left:1814.80px;top:102.70px;font-size:12.5px;color:#d2d2d2;letter-spacing:0.3px;">0</div>
<div class="t" style="left:1303.60px;top:122.70px;font-size:12.5px;color:#c4c4c4;">Scale</div>
<div class="t" style="left:1551.90px;top:122.70px;font-size:12.5px;color:#c4c4c4;">X</div>
<div class="r" style="left:1567px;top:120px;width:103px;height:18px;background:#2a2a2a;border:1px solid #212121;border-radius:3px;box-sizing:border-box;"></div>
<div class="t" style="left:1569.80px;top:122.70px;font-size:12.5px;color:#d2d2d2;letter-spacing:0.3px;">1</div>
<div class="t" style="left:1674.60px;top:122.70px;font-size:12.5px;color:#c4c4c4;">Y</div>
<div class="r" style="left:1689px;top:120px;width:104px;height:18px;background:#2a2a2a;border:1px solid #212121;border-radius:3px;box-sizing:border-box;"></div>
<div class="t" style="left:1691.80px;top:122.70px;font-size:12.5px;color:#d2d2d2;letter-spacing:0.3px;">1</div>
<div class="t" style="left:1798.40px;top:122.70px;font-size:12.5px;color:#c4c4c4;">Z</div>
<div class="r" style="left:1812px;top:120px;width:104px;height:18px;background:#2a2a2a;border:1px solid #212121;border-radius:3px;box-sizing:border-box;"></div>
<div class="t" style="left:1814.80px;top:122.70px;font-size:12.5px;color:#d2d2d2;letter-spacing:0.3px;">1</div>
<svg class="r" style="left:1529px;top:123px;" width="14" height="12" viewBox="0 0 14 12"><path d="M4.5 3 H3.5 A3 3 0 0 0 3.5 9 H6 M8 3 H10.5 A3 3 0 0 1 10.5 9 H9.5" fill="none" stroke="#c4c4c4" stroke-width="1.1"/><path d="M2 0.5 L12 11.5" stroke="#c4c4c4" stroke-width="1.1"/></svg>
<div class="r" style="left:1285px;top:147px;width:634px;height:1px;background:#232323;"></div>
<div class="r" style="left:1285px;top:148px;width:634px;height:20px;background:#3e3e3e;"></div>
<div class="r" style="left:1285px;top:168px;width:634px;height:1px;background:#353535;"></div>
<svg class="r" style="left:1291px;top:155px;" width="9" height="8" viewBox="0 0 9 8"><path d="M0.5 0.5H8.5L4.5 7.5Z" fill="#7a7a7a"/></svg>
<svg class="r" style="left:1306px;top:151px;" width="14" height="15" viewBox="0 0 14 15"><path d="M7 0.8 L13.2 3.8 V11 L7 14.2 L0.8 11 V3.8Z" fill="#a4ec5c"/><path d="M7 0.8 L13.2 3.8 L7 7 L0.8 3.8Z" fill="#b0f070"/><path d="M7 7 L13.2 3.8 M7 7 L0.8 3.8 M7 7 V14.2" stroke="#3e3e3e" stroke-width="1" fill="none"/></svg>
<div class="r" style="left:1325px;top:151px;width:14px;height:14px;background:#2a2a2a;border:1px solid #212121;border-radius:3px;box-sizing:border-box;"></div>
<svg class="r" style="left:1325px;top:151px;" width="14" height="14" viewBox="0 0 14 14"><path d="M3.3 7.2 L5.8 9.8 L10.8 4" fill="none" stroke="#e8e8e8" stroke-width="1.6"/></svg>
<div class="t" style="left:1344.90px;top:152.39px;font-size:12.3px;color:#d8d8d8;font-weight:bold;">Box Collider</div>
<svg class="r" style="left:1860px;top:151px;" width="14" height="14" viewBox="0 0 14 14"><circle cx="7" cy="7" r="6" fill="#c8c8c8"/><path d="M5 5.3 Q5 3.5 7 3.5 Q9 3.5 9 5.2 Q9 6.4 7.5 7 Q7 7.3 7 8.3" fill="none" stroke="#3e3e3e" stroke-width="1.5"/><circle cx="7" cy="10.3" r="0.9" fill="#3e3e3e"/></svg>
<svg class="r" style="left:1880px;top:151px;" width="14" height="14" viewBox="0 0 14 14"><path d="M1 4H13M1 10H13" stroke="#c8c8c8" stroke-width="1.2"/><rect x="7.5" y="2" width="2" height="4" fill="#c8c8c8"/><rect x="3.5" y="8" width="2" height="4" fill="#c8c8c8"/></svg>
<svg class="r" style="left:1905px;top:152px;" width="4" height="12" viewBox="0 0 4 12"><circle cx="2" cy="1.5" r="1.2" fill="#c8c8c8"/><circle cx="2" cy="6" r="1.2" fill="#c8c8c8"/><circle cx="2" cy="10.5" r="1.2" fill="#c8c8c8"/></svg>
<div class="t" style="left:1303.60px;top:175.90px;font-size:12.5px;color:#c4c4c4;">Edit Collider</div>
<div class="r" style="left:1550px;top:175px;width:32px;height:22px;background:#646464;border:1px solid #2a2a2a;border-radius:3px;box-sizing:border-box;"></div>
<svg class="r" style="left:1558px;top:179px;" width="16" height="15" viewBox="0 0 16 15"><g stroke="#d8d8d8" stroke-width="1" fill="none"><rect x="6.5" y="1.5" width="3" height="3"/><rect x="1.5" y="10" width="3" height="3.5"/><rect x="11.5" y="8" width="3" height="3"/><path d="M7 4.5L3 10M9 4.5L12.5 8"/></g></svg>
<div class="t" style="left:1303.60px;top:204.90px;font-size:12.5px;color:#c4c4c4;">Is Trigger</div>
<div class="r" style="left:1551px;top:204px;width:14px;height:14px;background:#2a2a2a;border:1px solid #212121;border-radius:3px;box-sizing:border-box;"></div>
<div class="t" style="left:1303.60px;top:224.90px;font-size:12.5px;color:#c4c4c4;">Provides Contacts</div>
<div class="r" style="left:1551px;top:224px;width:14px;height:14px;background:#2a2a2a;border:1px solid #212121;border-radius:3px;box-sizing:border-box;"></div>
<div class="t" style="left:1303.60px;top:244.90px;font-size:12.5px;color:#c4c4c4;">Material</div>
<div class="r" style="left:1551px;top:242px;width:365px;height:18.5px;background:#2a2a2a;border:1px solid #212121;border-radius:3px;box-sizing:border-box;"></div>
<svg class="r" style="left:1554px;top:245px;" width="12" height="12" viewBox="0 0 12 12"><circle cx="7" cy="3.5" r="2.5" fill="#8ad04a"/><path d="M1 11.5 L3.5 6.5 H10.5 L11.5 11.5Z" fill="#8ad04a"/><path d="M1 11.5 L4 7" stroke="#e8e8e8" stroke-width="1.3"/></svg>
<div class="t" style="left:1566.60px;top:244.90px;font-size:12.5px;color:#d2d2d2;">PhysGrabObject</div>
<div class="r" style="left:1896px;top:243px;width:1px;height:16px;background:#222222;"></div>
<svg class="r" style="left:1900px;top:245px;" width="12" height="12" viewBox="0 0 12 12"><circle cx="6" cy="6" r="5" fill="none" stroke="#c4c4c4" stroke-width="1.2"/><circle cx="6" cy="6" r="2" fill="#c4c4c4"/></svg>
<div class="t" style="left:1303.60px;top:264.80px;font-size:12.5px;color:#c4c4c4;">Center</div>
<div class="t" style="left:1551.90px;top:264.70px;font-size:12.5px;color:#c4c4c4;">X</div>
<div class="r" style="left:1567px;top:262px;width:103px;height:18px;background:#2a2a2a;border:1px solid #212121;border-radius:3px;box-sizing:border-box;"></div>
<div class="t" style="left:1569.80px;top:264.70px;font-size:12.5px;color:#d2d2d2;letter-spacing:0.3px;">-5.960464e-08</div>
<div class="t" style="left:1674.60px;top:264.70px;font-size:12.5px;color:#c4c4c4;">Y</div>
<div class="r" style="left:1689px;top:262px;width:104px;height:18px;background:#2a2a2a;border:1px solid #212121;border-radius:3px;box-sizing:border-box;"></div>
<div class="t" style="left:1691.80px;top:264.70px;font-size:12.5px;color:#d2d2d2;letter-spacing:0.3px;">1.25</div>
<div class="t" style="left:1798.40px;top:264.70px;font-size:12.5px;color:#c4c4c4;">Z</div>
<div class="r" style="left:1812px;top:262px;width:104px;height:18px;background:#2a2a2a;border:1px solid #212121;border-radius:3px;box-sizing:border-box;"></div>
<div class="t" style="left:1814.80px;top:264.70px;font-size:12.5px;color:#d2d2d2;letter-spacing:0.3px;">-1.490116e-08</div>
<div class="t" style="left:1303.60px;top:284.80px;font-size:12.5px;color:#c4c4c4;">Size</div>
<div class="t" style="left:1551.90px;top:284.70px;font-size:12.5px;color:#c4c4c4;">X</div>
<div class="r" style="left:1567px;top:282px;width:103px;height:18px;background:#2a2a2a;border:1px solid #212121;border-radius:3px;box-sizing:border-box;"></div>
<div class="t" style="left:1569.80px;top:284.70px;font-size:12.5px;color:#d2d2d2;letter-spacing:0.3px;">1.4</div>
<div class="t" style="left:1674.60px;top:284.70px;font-size:12.5px;color:#c4c4c4;">Y</div>
<div class="r" style="left:1689px;top:282px;width:104px;height:18px;background:#2a2a2a;border:1px solid #212121;border-radius:3px;box-sizing:border-box;"></div>
<div class="t" style="left:1691.80px;top:284.70px;font-size:12.5px;color:#d2d2d2;letter-spacing:0.3px;">2.4</div>
<div class="t" style="left:1798.40px;top:284.70px;font-size:12.5px;color:#c4c4c4;">Z</div>
<div class="r" style="left:1812px;top:282px;width:104px;height:18px;background:#2a2a2a;border:1px solid #212121;border-radius:3px;box-sizing:border-box;"></div>
<div class="t" style="left:1814.80px;top:284.70px;font-size:12.5px;color:#d2d2d2;letter-spacing:0.3px;">0.09999993</div>
<svg class="r" style="left:1293px;top:306px;" width="8" height="10" viewBox="0 0 8 10"><path d="M0.5 0.5V9.5L7.5 5Z" fill="#7a7a7a"/></svg>
<div class="t" style="left:1303.60px;top:304.80px;font-size:12.5px;color:#c4c4c4;">Layer Overrides</div>
<div class="r" style="left:1285px;top:327px;width:634px;height:1px;background:#232323;"></div>
<div class="r" style="left:1285px;top:328px;width:634px;height:20px;background:#3e3e3e;"></div>
<div class="r" style="left:1285px;top:348px;width:634px;height:1px;background:#353535;"></div>
<svg class="r" style="left:1291px;top:335px;" width="9" height="8" viewBox="0 0 9 8"><path d="M0.5 0.5H8.5L4.5 7.5Z" fill="#7a7a7a"/></svg>
<svg class="r" style="left:1307px;top:331px;" width="12" height="14" viewBox="0 0 12 14"><path d="M0.5 0.5 H8.5 L11.5 3.5 V13.5 H0.5Z" fill="#e8e8e8"/><path d="M4.5 3.5 L3.5 11 M8 3.5 L7 11 M2.2 5.8 H9.5 M2 8.7 H9.3" stroke="#2a8a3a" stroke-width="1.1"/></svg>
<div class="r" style="left:1325px;top:331px;width:14px;height:14px;background:#2a2a2a;border:1px solid #212121;border-radius:3px;box-sizing:border-box;"></div>
<svg class="r" style="left:1325px;top:331px;" width="14" height="14" viewBox="0 0 14 14"><path d="M3.3 7.2 L5.8 9.8 L10.8 4" fill="none" stroke="#e8e8e8" stroke-width="1.6"/></svg>
<div class="t" style="left:1344.90px;top:332.39px;font-size:12.3px;color:#d8d8d8;font-weight:bold;">Phys Grab Object Box Collider (Script)</div>
<svg class="r" style="left:1860px;top:331px;" width="14" height="14" viewBox="0 0 14 14"><circle cx="7" cy="7" r="6" fill="#c8c8c8"/><path d="M5 5.3 Q5 3.5 7 3.5 Q9 3.5 9 5.2 Q9 6.4 7.5 7 Q7 7.3 7 8.3" fill="none" stroke="#3e3e3e" stroke-width="1.5"/><circle cx="7" cy="10.3" r="0.9" fill="#3e3e3e"/></svg>
<svg class="r" style="left:1880px;top:331px;" width="14" height="14" viewBox="0 0 14 14"><path d="M1 4H13M1 10H13" stroke="#c8c8c8" stroke-width="1.2"/><rect x="7.5" y="2" width="2" height="4" fill="#c8c8c8"/><rect x="3.5" y="8" width="2" height="4" fill="#c8c8c8"/></svg>
<svg class="r" style="left:1905px;top:332px;" width="4" height="12" viewBox="0 0 4 12"><circle cx="2" cy="1.5" r="1.2" fill="#c8c8c8"/><circle cx="2" cy="6" r="1.2" fill="#c8c8c8"/><circle cx="2" cy="10.5" r="1.2" fill="#c8c8c8"/></svg>
<div class="t" style="left:1303.60px;top:355.90px;font-size:12.5px;color:#7a7a7a;">Script</div>
<div class="r" style="left:1551px;top:354px;width:365px;height:17.5px;background:#2d2d2d;border:1px solid #262626;border-radius:3px;box-sizing:border-box;"></div>
<svg class="r" style="left:1555px;top:357px;" width="10" height="12" viewBox="0 0 10 12"><path d="M0.5 0.5 H7 L9.5 3 V11.5 H0.5Z" fill="#7a7a7a"/><rect x="2.5" y="4" width="4" height="5" fill="#4a6a4a"/></svg>
<div class="t" style="left:1566.60px;top:356.00px;font-size:12.5px;color:#8a8a8a;">PhysGrabObjectBoxCollider</div>
<svg class="r" style="left:1900px;top:357px;" width="12" height="12" viewBox="0 0 12 12"><circle cx="6" cy="6" r="5" fill="none" stroke="#7a7a7a" stroke-width="1.2"/><circle cx="6" cy="6" r="2" fill="#7a7a7a"/></svg>
<div class="t" style="left:1303.60px;top:375.90px;font-size:12.5px;color:#c4c4c4;">Draw Gizmos</div>
<div class="r" style="left:1551px;top:375px;width:14px;height:14px;background:#2a2a2a;border:1px solid #212121;border-radius:3px;box-sizing:border-box;"></div>
<svg class="r" style="left:1551px;top:375px;" width="14" height="14" viewBox="0 0 14 14"><path d="M3.3 7.2 L5.8 9.8 L10.8 4" fill="none" stroke="#e8e8e8" stroke-width="1.6"/></svg>
<div class="t" style="left:1303.60px;top:395.90px;font-size:12.5px;color:#c4c4c4;">Gizmo Transparency</div>
<div class="r" style="left:1551px;top:401px;width:305px;height:2px;background:#5e5e5e;"></div>
<svg class="r" style="left:1850.5px;top:396.5px;" width="11" height="11" viewBox="0 0 11 11"><circle cx="5.5" cy="5.5" r="5" fill="#999999"/></svg>
<div class="r" style="left:1866px;top:393px;width:50px;height:18px;background:#2a2a2a;border:1px solid #212121;border-radius:3px;box-sizing:border-box;"></div>
<div class="t" style="left:1868.60px;top:395.90px;font-size:12.5px;color:#d2d2d2;">1</div>
<div class="t" style="left:1303.60px;top:415.90px;font-size:12.5px;color:#c4c4c4;">Un Equip Collider</div>
<div class="r" style="left:1551px;top:415px;width:14px;height:14px;background:#2a2a2a;border:1px solid #212121;border-radius:3px;box-sizing:border-box;"></div>
<div class="r" style="left:1285px;top:440px;width:634px;height:1px;background:#232323;"></div>
<div class="r" style="left:1285px;top:441px;width:634px;height:20px;background:#3e3e3e;"></div>
<div class="r" style="left:1285px;top:461px;width:634px;height:1px;background:#353535;"></div>
<svg class="r" style="left:1291px;top:448px;" width="9" height="8" viewBox="0 0 9 8"><path d="M0.5 0.5H8.5L4.5 7.5Z" fill="#7a7a7a"/></svg>
<svg class="r" style="left:1307px;top:444px;" width="12" height="14" viewBox="0 0 12 14"><path d="M0.5 0.5 H8.5 L11.5 3.5 V13.5 H0.5Z" fill="#e8e8e8"/><path d="M4.5 3.5 L3.5 11 M8 3.5 L7 11 M2.2 5.8 H9.5 M2 8.7 H9.3" stroke="#2a8a3a" stroke-width="1.1"/></svg>
<div class="r" style="left:1325px;top:444px;width:14px;height:14px;background:#2a2a2a;border:1px solid #212121;border-radius:3px;box-sizing:border-box;"></div>
<svg class="r" style="left:1325px;top:444px;" width="14" height="14" viewBox="0 0 14 14"><path d="M3.3 7.2 L5.8 9.8 L10.8 4" fill="none" stroke="#e8e8e8" stroke-width="1.6"/></svg>
<div class="t" style="left:1344.90px;top:445.39px;font-size:12.3px;color:#d8d8d8;font-weight:bold;">Phys Grab Object Collider (Script)</div>
<svg class="r" style="left:1860px;top:444px;" width="14" height="14" viewBox="0 0 14 14"><circle cx="7" cy="7" r="6" fill="#c8c8c8"/><path d="M5 5.3 Q5 3.5 7 3.5 Q9 3.5 9 5.2 Q9 6.4 7.5 7 Q7 7.3 7 8.3" fill="none" stroke="#3e3e3e" stroke-width="1.5"/><circle cx="7" cy="10.3" r="0.9" fill="#3e3e3e"/></svg>
<svg class="r" style="left:1880px;top:444px;" width="14" height="14" viewBox="0 0 14 14"><path d="M1 4H13M1 10H13" stroke="#c8c8c8" stroke-width="1.2"/><rect x="7.5" y="2" width="2" height="4" fill="#c8c8c8"/><rect x="3.5" y="8" width="2" height="4" fill="#c8c8c8"/></svg>
<svg class="r" style="left:1905px;top:445px;" width="4" height="12" viewBox="0 0 4 12"><circle cx="2" cy="1.5" r="1.2" fill="#c8c8c8"/><circle cx="2" cy="6" r="1.2" fill="#c8c8c8"/><circle cx="2" cy="10.5" r="1.2" fill="#c8c8c8"/></svg>
<div class="t" style="left:1303.60px;top:469.10px;font-size:12.5px;color:#7a7a7a;">Script</div>
<div class="r" style="left:1551px;top:467px;width:365px;height:17.5px;background:#2d2d2d;border:1px solid #262626;border-radius:3px;box-sizing:border-box;"></div>
<svg class="r" style="left:1555px;top:470px;" width="10" height="12" viewBox="0 0 10 12"><path d="M0.5 0.5 H7 L9.5 3 V11.5 H0.5Z" fill="#7a7a7a"/><rect x="2.5" y="4" width="4" height="5" fill="#4a6a4a"/></svg>
<div class="t" style="left:1566.60px;top:469.00px;font-size:12.5px;color:#8a8a8a;">PhysGrabObjectCollider</div>
<svg class="r" style="left:1900px;top:470px;" width="12" height="12" viewBox="0 0 12 12"><circle cx="6" cy="6" r="5" fill="none" stroke="#7a7a7a" stroke-width="1.2"/><circle cx="6" cy="6" r="2" fill="#7a7a7a"/></svg>
<div class="r" style="left:1285px;top:493px;width:634px;height:1px;background:#232323;"></div>
<div class="r" style="left:1488px;top:503px;width:229px;height:23px;background:#585858;border:1px solid #303030;border-radius:3px;box-sizing:border-box;"></div>
<div class="t" style="left:1556.60px;top:507.60px;font-size:12.5px;color:#d8d8d8;">Add Component</div>
<div class="r" style="left:1285px;top:601px;width:634px;height:2px;background:#1b1b1b;"></div>
<div class="r" style="left:1285px;top:603px;width:634px;height:19px;background:#262626;"></div>
<div class="r" style="left:1286px;top:603px;width:95px;height:19px;background:#3c3c3c;border-radius:4px 4px 0 0;"></div>
<svg class="r" style="left:1292px;top:605px;" width="14" height="14" viewBox="0 0 14 14"><path d="M4 4.5H12M5.5 7.5H12M5.5 10.5H12" stroke="#d0d0d0" stroke-width="1.2"/><circle cx="2.8" cy="4.5" r="1.1" fill="#d0d0d0"/><circle cx="4.2" cy="7.5" r="1" fill="#d0d0d0"/><circle cx="4.2" cy="10.5" r="1" fill="#d0d0d0"/></svg>
<div class="t" style="left:1308.90px;top:606.90px;font-size:12.5px;color:#d2d2d2;">Hierarchy</div>
<svg class="r" style="left:1884px;top:605px;" width="10" height="13" viewBox="0 0 10 13"><path d="M1.8 4.2 A2.8 2.8 0 0 1 7.3 3.8 V7.4" fill="none" stroke="#d0d0d0" stroke-width="1.1"/><rect x="1.6" y="7.6" width="6.8" height="4.4" rx="0.6" fill="none" stroke="#d0d0d0" stroke-width="1.2"/></svg>
<svg class="r" style="left:1904px;top:607px;" width="4" height="10" viewBox="0 0 4 10"><rect x="1" y="0.3" width="2" height="2" fill="#d0d0d0"/><rect x="1" y="4" width="2" height="2" fill="#d0d0d0"/><rect x="1" y="7.7" width="2" height="2" fill="#d0d0d0"/></svg>
<div class="r" style="left:1285px;top:622px;width:634px;height:20px;background:#3c3c3c;"></div>
<div class="r" style="left:1285px;top:642px;width:634px;height:1px;background:#232323;"></div>
<svg class="r" style="left:1291px;top:625px;" width="14" height="14" viewBox="0 0 14 14"><path d="M7 1.5V12.5M1.5 7H12.5" stroke="#c4c4c4" stroke-width="1.8"/></svg>
<svg class="r" style="left:1308px;top:630px;" width="8" height="5" viewBox="0 0 8 5"><path d="M0 0H8L4 4.5Z" fill="#c4c4c4"/></svg>
<div class="r" style="left:1591px;top:624px;width:325px;height:16px;background:#2a2a2a;border:1px solid #212121;border-radius:4px;box-sizing:border-box;"></div>
<div class="r" style="left:1898px;top:625px;width:1px;height:14px;background:#3a3a3a;"></div>
<svg class="r" style="left:1596px;top:627px;" width="12" height="10" viewBox="0 0 12 10"><circle cx="3.5" cy="3.5" r="2.3" fill="none" stroke="#b0b0b0" stroke-width="1.2"/><path d="M5 5L7.5 7.5" stroke="#b0b0b0" stroke-width="1.5"/><path d="M8.5 3H11.5L10 5Z" fill="#b0b0b0"/></svg>
<div class="t" style="left:1609.60px;top:625.35px;font-size:11.5px;color:#7e7e7e;">All</div>
<svg class="r" style="left:1902px;top:625px;" width="13" height="13" viewBox="0 0 13 13"><rect x="3.5" y="1.5" width="8" height="8" fill="none" stroke="#c4c4c4" stroke-width="1"/><rect x="1.5" y="7.5" width="4" height="4" fill="#2a2a2a" stroke="#c4c4c4" stroke-width="1"/><path d="M5.5 7.5L9.5 3.5M7 3.5H9.5V6" stroke="#c4c4c4" stroke-width="1" fill="none"/></svg>
<div class="r" style="left:1285px;top:643px;width:634px;height:25px;background:#3e3e3e;"></div>
<div class="r" style="left:1285px;top:668px;width:634px;height:1px;background:#333333;"></div>
<svg class="r" style="left:1290px;top:650px;" width="8" height="11" viewBox="0 0 8 11"><path d="M6 1L1.5 5.5L6 10" fill="none" stroke="#9a9a9a" stroke-width="1.2"/></svg>
<svg class="r" style="left:1555px;top:648px;" width="14" height="15" viewBox="0 0 14 15"><path d="M7 0.8 L13.2 3.8 V11 L7 14.2 L0.8 11 V3.8Z" fill="#7fd0f5"/><path d="M7 7 L13.2 3.8 M7 7 L0.8 3.8 M7 7 V14.2" stroke="#3e6f90" stroke-width="0.9" fill="none"/><path d="M7 0.8 L13.2 3.8 L7 7 L0.8 3.8Z" fill="#a9e2fb"/></svg>
<div class="t" style="left:1572.00px;top:648.69px;font-size:12.3px;color:#d2d2d2;font-weight:bold;">Manor Door*</div>
<svg class="r" style="left:1906px;top:649px;" width="4" height="12" viewBox="0 0 4 12"><circle cx="2" cy="1.5" r="1.2" fill="#c4c4c4"/><circle cx="2" cy="6" r="1.2" fill="#c4c4c4"/><circle cx="2" cy="10.5" r="1.2" fill="#c4c4c4"/></svg>
<div class="r" style="left:1285px;top:669px;width:32px;height:292px;background:#333333;"></div>
<div class="r" style="left:1317px;top:669px;width:602px;height:292px;background:#383838;"></div>
<div class="r" style="left:1285px;top:716px;width:32px;height:16px;background:#454545;"></div>
<div class="r" style="left:1317px;top:716px;width:602px;height:16px;background:#4b4b4b;"></div>
<svg class="r" style="left:1333px;top:671.7px;" width="10" height="8" viewBox="0 0 10 8"><path d="M0.5 0.5H9.5L5 7.5Z" fill="#7a7a7a"/></svg>
<svg class="r" style="left:1345.5px;top:669.2px;" width="14" height="15" viewBox="0 0 14 15"><path d="M7 1 L12.8 4 V10.8 L7 13.8 L1.2 10.8 V4Z M7 7 L12.8 4 M7 7 L1.2 4 M7 7 V13.8" fill="none" stroke="#c4c4c4" stroke-width="1.1"/></svg>
<div class="t" style="left:1362.80px;top:668.80px;font-size:12.5px;color:#c4c4c4;">Manor Door</div>
<svg class="r" style="left:1347px;top:687.7px;" width="10" height="8" viewBox="0 0 10 8"><path d="M0.5 0.5H9.5L5 7.5Z" fill="#7a7a7a"/></svg>
<svg class="r" style="left:1359.5px;top:685.2px;" width="14" height="15" viewBox="0 0 14 15"><path d="M7 1 L12.8 4 V10.8 L7 13.8 L1.2 10.8 V4Z M7 7 L12.8 4 M7 7 L1.2 4 M7 7 V13.8" fill="none" stroke="#c4c4c4" stroke-width="1.1"/></svg>
<div class="t" style="left:1376.80px;top:684.80px;font-size:12.5px;color:#c4c4c4;">Hinge</div>
<svg class="r" style="left:1373.5px;top:701.2px;" width="14" height="15" viewBox="0 0 14 15"><path d="M7 1 L12.8 4 V10.8 L7 13.8 L1.2 10.8 V4Z M7 7 L12.8 4 M7 7 L1.2 4 M7 7 V13.8" fill="none" stroke="#c4c4c4" stroke-width="1.1"/></svg>
<div class="t" style="left:1390.80px;top:700.80px;font-size:12.5px;color:#c4c4c4;">Mesh</div>
<svg class="r" style="left:1373.5px;top:717.2px;" width="14" height="15" viewBox="0 0 14 15"><path d="M7 1 L12.8 4 V10.8 L7 13.8 L1.2 10.8 V4Z M7 7 L12.8 4 M7 7 L1.2 4 M7 7 V13.8" fill="none" stroke="#c4c4c4" stroke-width="1.1"/></svg>
<div class="t" style="left:1390.80px;top:716.80px;font-size:12.5px;color:#c4c4c4;">Collision</div>
<svg class="r" style="left:1373.5px;top:733.2px;" width="14" height="15" viewBox="0 0 14 15"><path d="M7 1 L12.8 4 V10.8 L7 13.8 L1.2 10.8 V4Z M7 7 L12.8 4 M7 7 L1.2 4 M7 7 V13.8" fill="none" stroke="#c4c4c4" stroke-width="1.1"/></svg>
<div class="t" style="left:1390.80px;top:732.80px;font-size:12.5px;color:#c4c4c4;">Hinge Audio</div>
<svg class="r" style="left:1373.5px;top:749.2px;" width="14" height="15" viewBox="0 0 14 15"><path d="M7 1 L12.8 4 V10.8 L7 13.8 L1.2 10.8 V4Z M7 7 L12.8 4 M7 7 L1.2 4 M7 7 V13.8" fill="none" stroke="#c4c4c4" stroke-width="1.1"/></svg>
<div class="t" style="left:1390.80px;top:748.80px;font-size:12.5px;color:#c4c4c4;">Hinge</div>
<div class="r" style="left:1840px;top:962px;width:1px;height:19px;background:#2a2a2a;"></div>
<div class="r" style="left:1867px;top:962px;width:1px;height:19px;background:#2a2a2a;"></div>
<div class="r" style="left:1893.5px;top:962px;width:1px;height:19px;background:#2a2a2a;"></div>
<svg class="r" style="left:1845.5px;top:965.5px;" width="15" height="15" viewBox="0 0 15 15"><ellipse cx="7.5" cy="9" rx="4.6" ry="5.3" fill="#cfcfcf"/><ellipse cx="7.5" cy="3.2" rx="3" ry="2" fill="#cfcfcf"/><path d="M2.8 1.2L4.5 3M12.2 1.2L10.5 3M0.8 8.2L3.2 8.6M14.2 8.2L11.8 8.6M1.2 14L3.5 12M13.8 14L11.5 12" stroke="#cfcfcf" stroke-width="1.3"/><path d="M0.8 0.2L14.2 14.2" stroke="#1b1b1b" stroke-width="1.3"/></svg>
<svg class="r" style="left:1873px;top:965.5px;" width="15" height="15" viewBox="0 0 15 15"><ellipse cx="7" cy="3.3" rx="6" ry="2.6" fill="#cfcfcf"/><path d="M1 5.6 V7.6 Q7 11 13 7.6 V5.6 Q7 9 1 5.6Z M1 9.6 V11.6 Q7 15 13 11.6 V9.6 Q7 13 1 9.6Z" fill="#cfcfcf"/><path d="M0.5 0.5L14 14.2" stroke="#1b1b1b" stroke-width="1.3"/></svg>
<svg class="r" style="left:1899px;top:965.5px;" width="15" height="15" viewBox="0 0 15 15"><circle cx="7" cy="7.3" r="6.4" fill="none" stroke="#c8c8c8" stroke-width="1.1"/><path d="M4 7.6L6.2 9.8L10.2 5.5" fill="none" stroke="#c8c8c8" stroke-width="1.4"/></svg>
</body></html>
